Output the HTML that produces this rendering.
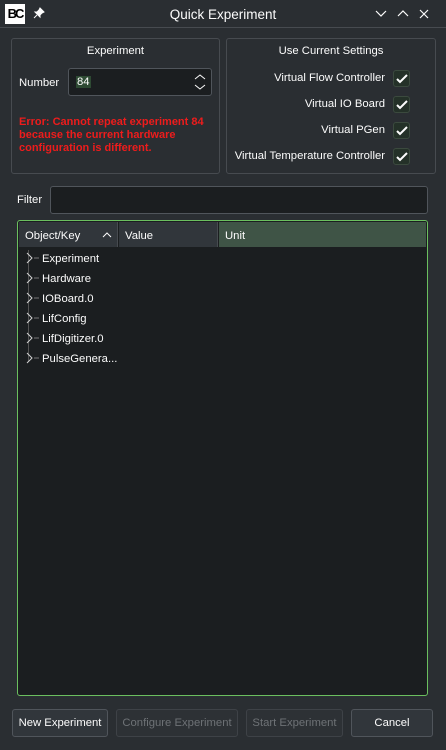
<!DOCTYPE html><html><head><style>
*{box-sizing:border-box;margin:0;padding:0}
body{width:446px;height:750px;background:#2a2e32;font-family:"Liberation Sans",sans-serif;font-size:11.3px;color:#fcfcfc;position:relative;overflow:hidden}
.a{position:absolute}
.box{position:absolute;border:1px solid #474b50;border-radius:3px}
.chk{position:absolute;left:393px;width:17px;height:17px;background:#243128;border:1px solid #3b4a3e;border-radius:3px}
.chk svg{position:absolute;left:2px;top:3px}
.lbl{position:absolute;right:61px;text-align:right;white-space:nowrap}
.btn{position:absolute;top:709px;height:28px;border:1px solid #50555b;border-radius:3px;background:#31363b;text-align:center;line-height:27px}
.dis{color:#6e7276;border-color:#3e4247;background:#2d3135}
.row{position:absolute;left:42px}
</style></head><body>
<div class="a" style="left:0;top:0;width:446px;height:28px;background:#2a2e32;border-bottom:1px solid #474b50"></div>
<div class="a" style="left:5px;top:4px;width:20px;height:20px;background:#fff;color:#000;font-weight:bold;font-size:13px;line-height:20px;text-align:center;letter-spacing:-2px">BC</div>
<svg class="a" style="left:33px;top:7px" width="12" height="12" viewBox="0 0 12 12"><path d="M7 1l4 4-2 1-2 2 0 2-5-5 2 0 2-2z M4 8L1 11" stroke="#fcfcfc" fill="#fcfcfc" stroke-width="1"/></svg>
<div class="a" style="left:0;width:446px;top:7px;text-align:center;font-size:13.5px">Quick Experiment</div>
<svg class="a" style="left:374px;top:9px" width="60" height="10"><path d="M2 2l5 5 5-5M24 7l5-5 5 5M46 1l8 8M54 1l-8 8" stroke="#fcfcfc" fill="none" stroke-width="1.2"/></svg>

<div class="box" style="left:11px;top:38px;width:209px;height:136px"></div>
<div class="a" style="left:11px;width:209px;top:45px;text-align:center">Experiment</div>
<div class="a" style="left:19px;top:77px">Number</div>
<div class="a" style="left:68px;top:68px;width:144px;height:28px;background:#1b1e20;border:1px solid #50555b;border-radius:3px"></div>
<div class="a" style="left:76px;top:76px;background:#2e4a33;padding:0 1px">84</div>
<svg class="a" style="left:194px;top:73px" width="12" height="18"><path d="M1 6l5-4 5 4M1 12l5 4 5-4" stroke="#fcfcfc" fill="none"/></svg>
<div class="a" style="left:19px;top:116px;color:#ee1c1c;font-weight:bold;font-size:11px;line-height:13px">Error: Cannot repeat experiment 84<br>because the current hardware<br>configuration is different.</div>

<div class="box" style="left:226px;top:38px;width:210px;height:136px"></div>
<div class="a" style="left:226px;width:210px;top:45px;text-align:center">Use Current Settings</div>
<div class="lbl" style="top:72px">Virtual Flow Controller</div>
<div class="lbl" style="top:98px">Virtual IO Board</div>
<div class="lbl" style="top:124px">Virtual PGen</div>
<div class="lbl" style="top:150px">Virtual Temperature Controller</div>
<div class="chk" style="top:70px"><svg width="12" height="10"><path d="M1 5l3 3 7-7" stroke="#fcfcfc" fill="none" stroke-width="2"/></svg></div>
<div class="chk" style="top:96px"><svg width="12" height="10"><path d="M1 5l3 3 7-7" stroke="#fcfcfc" fill="none" stroke-width="2"/></svg></div>
<div class="chk" style="top:122px"><svg width="12" height="10"><path d="M1 5l3 3 7-7" stroke="#fcfcfc" fill="none" stroke-width="2"/></svg></div>
<div class="chk" style="top:148px"><svg width="12" height="10"><path d="M1 5l3 3 7-7" stroke="#fcfcfc" fill="none" stroke-width="2"/></svg></div>

<div class="a" style="left:17px;top:194px">Filter</div>
<div class="a" style="left:50px;top:186px;width:378px;height:28px;background:#1b1e20;border:1px solid #50555b;border-radius:3px"></div>

<div class="a" style="left:17px;top:220px;width:411px;height:476px;background:#1b1e20;border:1px solid #6bbf5f;border-radius:3px"></div>
<div class="a" style="left:19px;top:222px;width:99px;height:25px;background:#31363b;border-right:1px solid #474b50"></div>
<div class="a" style="left:119px;top:222px;width:99px;height:25px;background:#31363b;border-right:1px solid #474b50"></div>
<div class="a" style="left:219px;top:222px;width:207px;height:25px;background:#3f5446"></div>
<div class="a" style="left:25px;top:230px">Object/Key</div>
<svg class="a" style="left:102px;top:231px" width="10" height="7"><path d="M1 6l4-4 4 4" stroke="#fcfcfc" fill="none"/></svg>
<div class="a" style="left:125px;top:230px">Value</div>
<div class="a" style="left:225px;top:230px">Unit</div>
<div class="a" style="left:28px;top:250px;width:1px;height:112px;background:#555"></div>
<svg class="a" style="left:24px;top:249px" width="18" height="120"><g stroke="#d0d0d0" fill="none"><path d="M3 4l5 5-5 5M3 24l5 5-5 5M3 44l5 5-5 5M3 64l5 5-5 5M3 84l5 5-5 5M3 104l5 5-5 5"/><path d="M10 9h5M10 29h5M10 49h5M10 69h5M10 89h5M10 109h5" stroke="#777"/></g></svg>
<div class="row" style="top:253px">Experiment</div>
<div class="row" style="top:273px">Hardware</div>
<div class="row" style="top:293px">IOBoard.0</div>
<div class="row" style="top:313px">LifConfig</div>
<div class="row" style="top:333px">LifDigitizer.0</div>
<div class="row" style="top:353px">PulseGenera...</div>

<div class="btn" style="left:12px;width:96px">New Experiment</div>
<div class="btn dis" style="left:116px;width:122px">Configure Experiment</div>
<div class="btn dis" style="left:246px;width:97px">Start Experiment</div>
<div class="btn" style="left:351px;width:82px">Cancel</div>
</body></html>
